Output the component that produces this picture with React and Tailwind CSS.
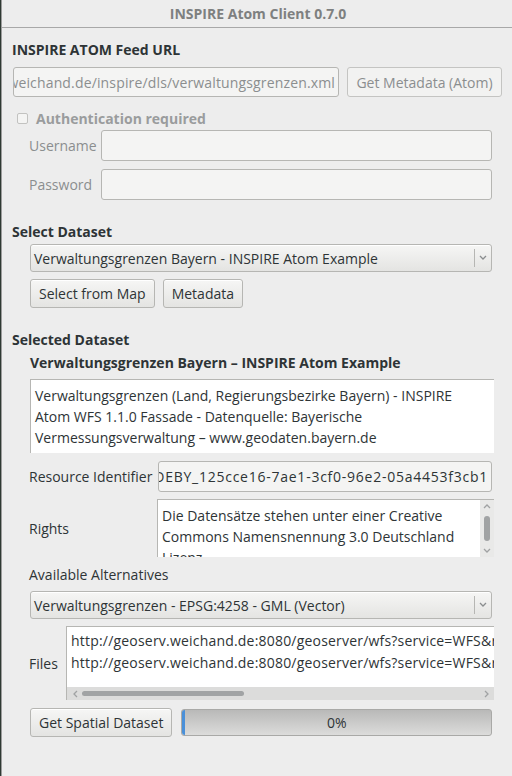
import React from "react";

const btn =
  "h-full px-[8px] rounded-[3px] border border-[#b6b6b3] bg-gradient-to-b from-[#f6f6f5] to-[#e4e4e2] text-[#2e3436] flex items-center whitespace-nowrap shadow-[inset_0_1px_0_#ffffff]";
const entry =
  "rounded-[3px] border border-[#b6b6b3] bg-[#f4f4f3] flex items-center overflow-hidden whitespace-nowrap";

function Chevron({ dir = "down", className = "" }) {
  const d = {
    down: "M1 2 L4 5 L7 2",
    up: "M1 5 L4 2 L7 5",
    left: "M5 1 L2 4 L5 7",
    right: "M3 1 L6 4 L3 7",
  }[dir];
  return (
    <svg width="8" height="8" viewBox="0 0 8 8" className={className}>
      <path d={d} fill="none" stroke="currentColor" strokeWidth="1.3" />
    </svg>
  );
}

function Combo({ text }) {
  return (
    <div className="h-full w-full flex items-center rounded-[3px] border border-[#b6b6b3] bg-gradient-to-b from-[#f6f6f5] to-[#e4e4e2] shadow-[inset_0_1px_0_#ffffff]">
      <span className="flex-1 pl-[3px] whitespace-nowrap">{text}</span>
      <div className="h-[18px] w-px bg-[#b6b6b3]" />
      <div className="w-[16px] flex justify-center text-[#8a8d8f]">
        <Chevron dir="down" />
      </div>
    </div>
  );
}

export default function App() {
  return (
    <div className="w-[512px] h-[776px] bg-[#2f3a33] pl-px">
      <div className="h-full bg-[#ededed] border-l border-[#9c9c9c] flex flex-col font-['Open_Sans',sans-serif] text-[14px] text-[#2e3436]">
        {/* title bar */}
        <div className="h-[28px] shrink-0 border-b border-[#a8a8a8] flex items-center justify-center font-bold text-[#7e8080] pl-[2px]">
          INSPIRE Atom Client 0.7.0
        </div>

        <div className="flex flex-col pr-[20px]">
          {/* Feed URL */}
          <div className="mt-[13px] ml-[10px] h-[18px] leading-[18px] font-bold">INSPIRE ATOM Feed URL</div>
          <div className="mt-[8px] ml-[11px] h-[30px] flex gap-[8px] mr-[-10px]">
            <div className={entry + " w-[326px] shrink-0 justify-end pr-[3px] text-[#8b8e8f] tracking-[0.15px]"}>
              //geoserv.weichand.de/inspire/dls/verwaltungsgrenzen.xml
            </div>
            <div className="h-full flex-1 rounded-[3px] border border-[#c4c4c2] bg-[#f2f2f1] text-[#8b8e8f] flex items-center justify-center whitespace-nowrap">
              Get Metadata (Atom)
            </div>
          </div>

          {/* Authentication */}
          <div className="mt-[11px] ml-[15px] h-[20px] flex items-center gap-[8px] text-[#9a9c9d] font-bold">
            <div className="w-[11px] h-[11px] rounded-[2px] border border-[#c2c2c0] bg-[#f4f4f3]" />
            <span>Authentication required</span>
          </div>
          <div className="mt-[2px] ml-[27px] flex flex-col gap-[8px]">
            <div className="h-[31px] flex items-center">
              <span className="w-[72px] text-[#8b8e8f]">Username</span>
              <div className={entry + " h-full flex-1"} />
            </div>
            <div className="h-[31px] flex items-center">
              <span className="w-[72px] text-[#8b8e8f]">Password</span>
              <div className={entry + " h-full flex-1"} />
            </div>
          </div>

          {/* Select Dataset */}
          <div className="mt-[23px] ml-[10px] h-[18px] leading-[18px] font-bold">Select Dataset</div>
          <div className="mt-[3px] ml-[28px] h-[28px]">
            <Combo text="Verwaltungsgrenzen Bayern - INSPIRE Atom Example" />
          </div>
          <div className="mt-[7px] ml-[28px] h-[29px] flex gap-[8px]">
            <div className={btn}>Select from Map</div>
            <div className={btn}>Metadata</div>
          </div>

          {/* Selected Dataset */}
          <div className="mt-[23px] ml-[10px] h-[18px] leading-[18px] font-bold">Selected Dataset</div>
          <div className="mt-[5px] ml-[28px] h-[18px] leading-[18px] font-bold">
            Verwaltungsgrenzen Bayern – INSPIRE Atom Example
          </div>
          <div className="mt-[7px] ml-[28px] mr-[-2px] h-[74px] bg-white border-l border-t border-[#b6b6b3] pl-[4px] pt-[5px] leading-[21px]">
            <div>Verwaltungsgrenzen (Land, Regierungsbezirke Bayern) - INSPIRE</div>
            <div>Atom WFS 1.1.0 Fassade - Datenquelle: Bayerische</div>
            <div>Vermessungsverwaltung – www.geodaten.bayern.de</div>
          </div>

          {/* Resource identifier */}
          <div className="mt-[8px] ml-[27px] h-[31px] flex items-center">
            <span className="w-[129px] whitespace-nowrap">Resource Identifier</span>
            <div className={entry + " h-full flex-1 bg-[#f0f0ef] justify-end pr-[3px] tracking-[0.75px]"}>
              DEBY_125cce16-7ae1-3cf0-96e2-05a4453f3cb1
            </div>
          </div>

          {/* Rights */}
          <div className="mt-[7px] ml-[27px] h-[58px] flex items-center">
            <span className="w-[128px]">Rights</span>
            <div className="h-full flex-1 mr-[-2px] flex bg-white border-l border-t border-[#b6b6b3] overflow-hidden">
              <div className="flex-1 pl-[4px] pt-[5px] leading-[21px]">
                <div>Die Datensätze stehen unter einer Creative</div>
                <div>Commons Namensnennung 3.0 Deutschland</div>
                <div>Lizenz</div>
              </div>
              <div className="w-[14px] bg-[#e9e9e8] flex flex-col items-center text-[#a0a2a3]">
                <Chevron dir="up" className="mt-[3px]" />
                <div className="mt-[5px] w-[6px] h-[25px] rounded-full bg-[#a1a3a4]" />
                <Chevron dir="down" className="mt-auto mb-[2px]" />
              </div>
            </div>
          </div>

          {/* Alternatives */}
          <div className="mt-[9px] ml-[27px] h-[18px] leading-[18px]">Available Alternatives</div>
          <div className="mt-[7px] ml-[28px] h-[28px]">
            <Combo text="Verwaltungsgrenzen - EPSG:4258 - GML (Vector)" />
          </div>

          {/* Files */}
          <div className="mt-[7px] ml-[27px] h-[74px] flex items-center">
            <span className="w-[37px]">Files</span>
            <div className="h-full flex-1 min-w-0 mr-[-2px] flex flex-col bg-white border-l border-t border-[#b6b6b3] overflow-hidden">
              <div className="flex-1 pl-[4px] pt-[3px] leading-[22px] whitespace-nowrap tracking-[0.2px]">
                <div>http://geoserv.weichand.de:8080/geoserver/wfs?service=WFS&amp;request=GetFeature</div>
                <div>http://geoserv.weichand.de:8080/geoserver/wfs?service=WFS&amp;request=GetFeature</div>
              </div>
              <div className="h-[13px] shrink-0 bg-[#dcdcdb] flex items-center text-[#a0a2a3]">
                <Chevron dir="left" className="ml-[5px]" />
                <div className="ml-[2px] w-[162px] h-[5px] rounded-full bg-[#a1a3a4]" />
                <Chevron dir="right" className="ml-auto mr-[4px]" />
              </div>
            </div>
          </div>

          {/* Download */}
          <div className="mt-[8px] ml-[28px] h-[29px] flex items-center gap-[9px]">
            <div className={btn}>Get Spatial Dataset</div>
            <div className="h-[27px] flex-1 relative rounded-[3px] border border-[#a9a9a7] bg-gradient-to-b from-[#b9b9b8] to-[#dcdcdb] flex items-center justify-center">
              <div className="absolute left-0 top-0 bottom-0 w-[3px] rounded-l-[3px] bg-[#4a90d9]" />
              <span>0%</span>
            </div>
          </div>
        </div>
      </div>
    </div>
  );
}
